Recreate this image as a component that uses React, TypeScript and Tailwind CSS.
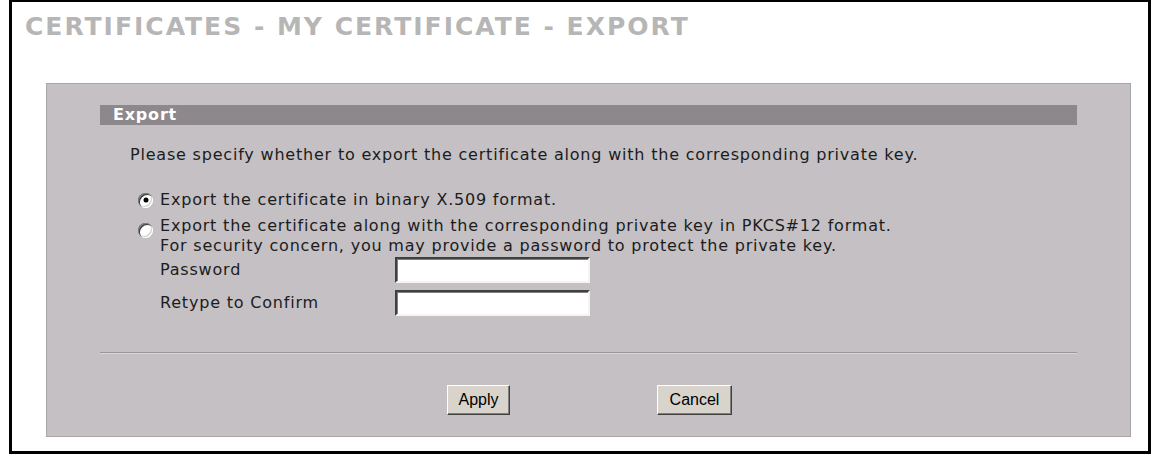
import { useState } from 'react'

const verdana = "font-['DejaVu_Sans',Verdana,sans-serif]"

function Radio({ checked, onClick }: { checked: boolean; onClick: () => void }) {
  return (
    <button
      type="button"
      onClick={onClick}
      className="relative size-[15px] shrink-0 rounded-full bg-white shadow-[inset_1px_1px_0_#808080,inset_2px_2px_0_#404040,inset_-1px_-1px_0_#ffffff,inset_-2px_-2px_0_#d4d0c8]"
    >
      {checked && <span className="absolute left-1/2 top-1/2 size-[5px] -translate-x-1/2 -translate-y-1/2 rounded-full bg-black" />}
    </button>
  )
}

function SunkenInput() {
  return (
    <input
      type="password"
      className="h-[26px] w-[195px] bg-white px-1 text-sm outline-none border-2 border-t-[#404040] border-l-[#404040] border-b-[#f4f4f4] border-r-[#f4f4f4] shadow-[inset_1px_1px_0_#808080]"
    />
  )
}

function ClassicButton({ children, className }: { children: string; className?: string }) {
  return (
    <button
      type="button"
      className={`h-[30px] bg-[#d8d4cc] font-['Liberation_Sans',Arial,sans-serif] text-[16px] text-black border border-t-white border-l-white border-b-[#404040] border-r-[#404040] shadow-[inset_-1px_-1px_0_#808080] ${className ?? ''}`}
    >
      {children}
    </button>
  )
}

export default function App() {
  const [mode, setMode] = useState<'binary' | 'pkcs'>('binary')

  return (
    <div className="h-[454px] w-[1151px] bg-white pl-[9px]">
      <div className={`flex h-full flex-col border-t-2 border-l-[3px] border-r-[3px] border-b-[3px] border-black ${verdana}`}>
        <h1 className="pl-[13px] pt-[10px] text-[25px] font-bold leading-[30px] tracking-[2px] text-[#b6b6b6]">
          CERTIFICATES - MY CERTIFICATE - EXPORT
        </h1>

        <div className="ml-[34px] mt-[41px] flex h-[354px] w-[1085px] flex-col border border-[#a9a6a9] bg-[#c4c0c4] px-[53px] pt-[21px] text-[16px] tracking-[0.8px] text-[#1c1c1c]">
          {/* Section header */}
          <div className="h-[20px] bg-[#8c888c] pl-[13px] font-bold leading-[20px] text-white">Export</div>

          <p className="mt-[20px] pl-[30px] leading-[20px]">
            Please specify whether to export the certificate along with the corresponding private key.
          </p>

          <div className="mt-[25px] flex flex-col pl-[38px] leading-[20px]">
            <label className="flex items-center gap-[7px]">
              <Radio checked={mode === 'binary'} onClick={() => setMode('binary')} />
              <span>Export the certificate in binary X.509 format.</span>
            </label>

            <div className="mt-[6px] flex items-start gap-[7px]">
              <div className="pt-[7px]">
                <Radio checked={mode === 'pkcs'} onClick={() => setMode('pkcs')} />
              </div>
              <div className="flex flex-col">
                <span>Export the certificate along with the corresponding private key in PKCS#12 format.</span>
                <span>For security concern, you may provide a password to protect the private key.</span>

                <div className="mt-[1px] grid grid-cols-[235px_auto] items-center gap-y-[7px]">
                  <span>Password</span>
                  <SunkenInput />
                  <span>Retype to Confirm</span>
                  <SunkenInput />
                </div>
              </div>
            </div>
          </div>

          <div className="mt-auto border-t border-[#9a979a] shadow-[0_1px_0_#d8d5d8]" />

          <div className="flex h-[83px] justify-center gap-[147px] pl-[2px] pt-[32px] tracking-normal">
            <ClassicButton className="w-[63px]">Apply</ClassicButton>
            <ClassicButton className="w-[75px]">Cancel</ClassicButton>
          </div>
        </div>
      </div>
    </div>
  )
}
